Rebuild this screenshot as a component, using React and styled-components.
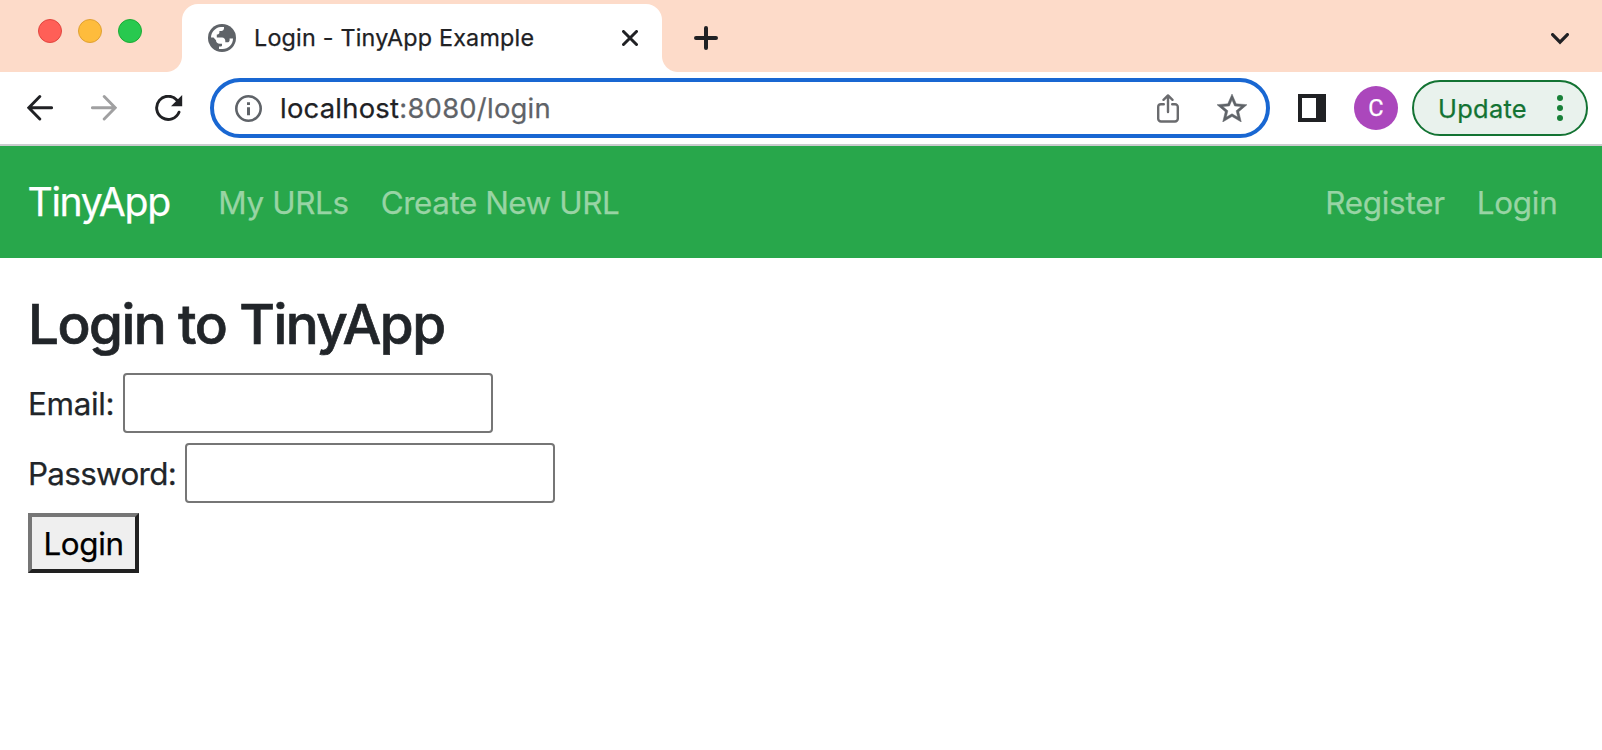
import React from "react";
import styled, { createGlobalStyle } from "styled-components";

const GlobalStyle = createGlobalStyle`
  * { box-sizing: border-box; }
  body {
    margin: 0;
    background: #fff;
    color: #212529;
    font-family: Inter, "Liberation Sans", sans-serif;
    font-weight: 400;
    -webkit-text-stroke: 0.25px currentColor;
  }
`;

const Window = styled.div`
  display: flex;
  flex-direction: column;
  height: 750px;
  overflow: hidden;
  background: #fff;
`;

/* ---- tab strip ---- */

const TabStrip = styled.div`
  display: flex;
  align-items: center;
  height: 72px;
  padding-right: 33px;
  background: #fddbc9;
`;

const TrafficLights = styled.div`
  display: flex;
  gap: 16px;
  width: 182px;
  padding: 0 0 10px 38px;
`;

const Light = styled.span`
  width: 24px;
  height: 24px;
  border-radius: 50%;
  border: 1px solid ${(p) => p.$edge};
  background: ${(p) => p.$fill};
`;

const Tab = styled.div`
  position: relative;
  display: flex;
  align-items: center;
  align-self: flex-end;
  width: 480px;
  height: 68px;
  padding: 0 24px 0 26px;
  border-radius: 16px 16px 0 0;
  background: #fff;

  &::before,
  &::after {
    content: "";
    position: absolute;
    bottom: 0;
    width: 16px;
    height: 16px;
  }
  &::before {
    left: -16px;
    background: radial-gradient(circle at 0 0, transparent 15.5px, #fff 16.5px);
  }
  &::after {
    right: -16px;
    background: radial-gradient(circle at 100% 0, transparent 15.5px, #fff 16.5px);
  }
`;

const TabTitle = styled.span`
  flex: 1;
  margin-left: 18px;
  font-size: 23.3px;
  letter-spacing: 0.22px;
  line-height: 32px;
  color: #202124;
  white-space: nowrap;
`;

const NewTab = styled.div`
  display: flex;
  flex: 1;
  padding: 4px 0 0 32px;
`;

const TabSearch = styled.div`
  display: flex;
  padding-top: 5px;
`;

/* ---- toolbar ---- */

const Toolbar = styled.div`
  display: flex;
  align-items: center;
  height: 74px;
  padding: 0 14px 0 27px;
  border-bottom: 2px solid #cbcccf;
`;

const NavButtons = styled.div`
  display: flex;
  gap: 38px;
  width: 183px;
`;

const AddressBar = styled.div`
  display: flex;
  align-items: center;
  width: 1060px;
  height: 60px;
  padding: 0 19px 0 21px;
  border: 4px solid #1967d2;
  border-radius: 30px;
`;

const Url = styled.span`
  flex: 1;
  margin-left: 18px;
  font-size: 27.4px;
  letter-spacing: 0.25px;
  line-height: 36px;
  color: #5f6368;
`;

const Host = styled.span`
  color: #202124;
`;

const PageActions = styled.div`
  display: flex;
  align-items: center;
  gap: 38px;
`;

const SidePanelIcon = styled.span`
  width: 28px;
  height: 28px;
  margin-left: 28px;
  border: 4px solid #202124;
  border-right-width: 10px;
`;

const Avatar = styled.span`
  display: flex;
  align-items: center;
  justify-content: center;
  width: 44px;
  height: 44px;
  margin: 0 14px 0 28px;
  border-radius: 50%;
  background: #ab47bc;
  color: #fff;
  font-family: Roboto, sans-serif;
  font-size: 23.5px;
`;

const UpdateButton = styled.div`
  display: flex;
  align-items: center;
  justify-content: space-between;
  width: 176px;
  height: 56px;
  padding: 0 23px 0 24px;
  border: 2px solid #137333;
  border-radius: 28px;
  background: #e9f2ed;
  color: #137333;
  font-size: 25.4px;
  letter-spacing: 0.3px;
`;

const MenuDots = styled.span`
  display: flex;
  flex-direction: column;
  gap: 4px;

  i {
    width: 6px;
    height: 6px;
    border-radius: 50%;
    background: #188038;
  }
`;

/* ---- page ---- */

const Navbar = styled.nav`
  display: flex;
  align-items: center;
  height: 112px;
  padding: 1px 44.5px 0 27.5px;
  background: #28a74b;
`;

const Brand = styled.span`
  margin-right: 48.5px;
  font-size: 39.2px;
  letter-spacing: -1.35px;
  line-height: 58px;
  padding-bottom: 1px;
  color: #fff;
`;

const NavLinks = styled.div`
  display: flex;
  gap: 32px;
  margin-left: ${(p) => (p.$end ? "auto" : "0")};
`;

const NavLink = styled.span`
  font-size: 31.4px;
  line-height: 48px;
  letter-spacing: ${(p) => p.$tracking || "-0.25px"};
  color: #98d4a4;
`;

const Content = styled.main`
  padding: 33px 28px;
`;

const Heading = styled.h2`
  margin: 0 0 15px;
  font-size: 54.8px;
  font-weight: 500;
  letter-spacing: -1.55px;
  line-height: 67px;
  -webkit-text-stroke-width: 0.7px;
`;

const Form = styled.form`
  display: flex;
  flex-direction: column;
  align-items: flex-start;
  gap: 10px;
`;

const Field = styled.div`
  display: flex;
  align-items: center;
`;

const Label = styled.label`
  width: ${(p) => p.$width}px;
  padding-top: 2px;
  font-size: 31.4px;
  letter-spacing: ${(p) => p.$tracking || "-0.35px"};
  line-height: 48px;
`;

const Input = styled.input`
  width: 370px;
  height: 60px;
  padding: 2px 4px;
  border: 2px solid #767676;
  border-radius: 4px;
  background: #fff;
  font: inherit;
  outline: none;
`;

const SubmitButton = styled.button`
  width: 111px;
  height: 60px;
  padding: 2px 0 0;
  border: 4px solid;
  border-color: #767676 #212121 #212121 #767676;
  border-radius: 0;
  background: #efefef;
  color: #000;
  font-family: inherit;
  font-size: 31.4px;
  letter-spacing: -0.35px;
  line-height: 48px;
`;

/* ---- icons ---- */

const GlobeIcon = () => (
  <svg width="28" height="28" viewBox="0 0 28 28">
    <circle cx="14" cy="14" r="14" fill="#5f6368" />
    <path
      fill="#fff"
      d="M3 13.6C3 8 7.300 3.400 12.800 2.900H16V4.200C16 5.800 14.800 6.900 13.300 6.900H11.400V8.600C11.400 9.700 10.600 10.500 9.600 10.500H8.800V13.600H14C16 13.600 17.300 15 17.300 16.800V18.200H19.200C20.800 18.200 21.600 17.300 21.600 15.900V14.500H25C25 20.500 20.200 25 14.500 25.100H11V22.500H13C13.800 22.500 14 21.900 14 21.300V19.800H11.800C9.500 19.800 8 18.300 8 16.300L5.500 13.600Z"
    />
  </svg>
);

const CloseIcon = () => (
  <svg width="16" height="16" viewBox="0 0 16 16" stroke="#202124" strokeWidth="3" strokeLinecap="round">
    <path d="M1.500 1.500L14.500 14.500M14.500 1.500L1.500 14.500" />
  </svg>
);

const PlusIcon = () => (
  <svg width="24" height="24" viewBox="0 0 24 24" stroke="#202124" strokeWidth="4" strokeLinecap="round">
    <path d="M12 2V22M2 12H22" />
  </svg>
);

const ChevronIcon = () => (
  <svg width="18" height="12" viewBox="0 0 18 12" fill="none" stroke="#202124" strokeWidth="3.200" strokeLinecap="round">
    <path d="M1.600 1.600L9 9.200L16.400 1.600" />
  </svg>
);

const ArrowIcon = ({ color, flip }) => (
  <svg width="26" height="26" viewBox="0 0 26 26" fill="none" stroke={color} strokeWidth="2.900" strokeLinecap="round">
    <g transform={flip ? "translate(26 0) scale(-1 1)" : undefined}>
      <path d="M2 12.800H24.600M12.800 1.600L1.800 12.800L12.800 24" />
    </g>
  </svg>
);

const ReloadIcon = () => (
  <svg width="28" height="26" viewBox="0 0 28 26">
    <path
      d="M24 17.200A11.600 11.600 0 1 1 22 5.200"
      fill="none"
      stroke="#202124"
      strokeWidth="2.900"
      strokeLinecap="round"
    />
    <path d="M27.200 0V11.300H16Z" fill="#202124" />
  </svg>
);

const InfoIcon = () => (
  <svg width="27" height="27" viewBox="0 0 27 27">
    <circle cx="13.500" cy="13.500" r="12.200" fill="none" stroke="#5f6368" strokeWidth="2.600" />
    <path d="M12 7.200H15V10H12ZM12 12.200H15V20.200H12Z" fill="#5f6368" />
  </svg>
);

const ShareIcon = () => (
  <svg width="22" height="29" viewBox="0 0 22 29" fill="none" stroke="#6a6b6e" strokeWidth="2.400" strokeLinecap="round" strokeLinejoin="round">
    <path d="M6.800 10.200H4A2.800 2.800 0 0 0 1.200 13V24.700A2.800 2.800 0 0 0 4 27.500H18A2.800 2.800 0 0 0 20.800 24.700V13A2.800 2.800 0 0 0 18 10.200H15.200" />
    <path d="M11 18V1.500M6.500 5.800L11 1.400L15.500 5.800" />
  </svg>
);

const StarIcon = () => (
  <svg width="30" height="28" viewBox="2 2 20 19" preserveAspectRatio="none">
    <path
      fill="#5f6368"
      stroke="#5f6368"
      strokeWidth="0.300"
      d="M22 9.240l-7.190-.62L12 2 9.190 8.630 2 9.240l5.460 4.730L5.820 21 12 17.270 18.180 21l-1.630-7.030L22 9.240zM12 15.400l-3.760 2.270 1-4.280-3.320-2.880 4.380-.38L12 6.100l1.710 4.040 4.380.38-3.320 2.880 1 4.280L12 15.400z"
    />
  </svg>
);

export default function App() {
  return (
    <Window>
      <GlobalStyle />
      <TabStrip>
        <TrafficLights>
          <Light $fill="#ff5f57" $edge="#e2463f" />
          <Light $fill="#febc3c" $edge="#e0a133" />
          <Light $fill="#28c94f" $edge="#1cac35" />
        </TrafficLights>
        <Tab>
          <GlobeIcon />
          <TabTitle>Login - TinyApp Example</TabTitle>
          <CloseIcon />
        </Tab>
        <NewTab>
          <PlusIcon />
        </NewTab>
        <TabSearch>
          <ChevronIcon />
        </TabSearch>
      </TabStrip>

      <Toolbar>
        <NavButtons>
          <ArrowIcon color="#202124" />
          <ArrowIcon color="#a0a0a1" flip />
          <ReloadIcon />
        </NavButtons>
        <AddressBar>
          <InfoIcon />
          <Url>
            <Host>localhost</Host>:8080/login
          </Url>
          <PageActions>
            <ShareIcon />
            <StarIcon />
          </PageActions>
        </AddressBar>
        <SidePanelIcon />
        <Avatar>C</Avatar>
        <UpdateButton>
          Update
          <MenuDots>
            <i />
            <i />
            <i />
          </MenuDots>
        </UpdateButton>
      </Toolbar>

      <Navbar>
        <Brand>TinyApp</Brand>
        <NavLinks>
          <NavLink $tracking="-0.35px">My URLs</NavLink>
          <NavLink $tracking="-0.45px">Create New URL</NavLink>
        </NavLinks>
        <NavLinks $end>
          <NavLink>Register</NavLink>
          <NavLink>Login</NavLink>
        </NavLinks>
      </Navbar>

      <Content>
        <Heading>Login to TinyApp</Heading>
        <Form>
          <Field>
            <Label $width={95}>Email:</Label>
            <Input type="email" />
          </Field>
          <Field>
            <Label $width={157} $tracking="-0.7px">Password:</Label>
            <Input type="password" />
          </Field>
          <SubmitButton type="button">Login</SubmitButton>
        </Form>
      </Content>
    </Window>
  );
}
